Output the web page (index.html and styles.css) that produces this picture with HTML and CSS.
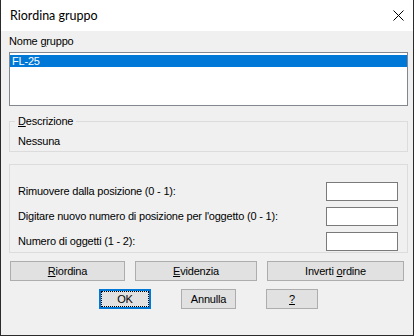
FILE: index.html
```html
<!DOCTYPE html>
<html lang="it">
<head>
  <meta charset="UTF-8" />
  <title>Riordina gruppo</title>
  <link rel="stylesheet" href="styles.css">
</head>
<body>
  <div class="window">
    <div class="titlebar">
      <span class="title">Riordina gruppo</span>
      <svg class="close" width="11" height="11" viewBox="0 0 11 11">
        <path d="M0.5 0.5 L10.5 10.5 M10.5 0.5 L0.5 10.5" stroke="#000" stroke-width="1" fill="none"/>
      </svg>
    </div>

    <div class="content">
      <div class="label">Nome <u>g</u>ruppo</div>
      <div class="listbox">
        <div class="item selected">FL-25</div>
      </div>

      <fieldset class="group desc">
        <legend><u>D</u>escrizione</legend>
        <div class="desc-text">Nessuna</div>
      </fieldset>

      <div class="group fields">
        <div class="field-row">
          <span>Rimuovere dalla posizione (0 - 1):</span>
          <input class="num" type="text">
        </div>
        <div class="field-row">
          <span>Digitare nuovo numero di posizione per l'oggetto (0 - 1):</span>
          <input class="num" type="text">
        </div>
        <div class="field-row">
          <span>Numero di oggetti (1 - 2):</span>
          <input class="num" type="text">
        </div>
      </div>

      <div class="actions">
        <button class="btn btn-reorder"><u>R</u>iordina</button>
        <button class="btn btn-highlight"><u>E</u>videnzia</button>
        <button class="btn btn-invert">Inverti <u>o</u>rdine</button>
      </div>

      <div class="dialog-btns">
        <button class="btn btn-ok">OK</button>
        <button class="btn btn-cancel">Annulla</button>
        <button class="btn btn-help"><u>?</u></button>
      </div>
    </div>
  </div>
</body>
</html>
```

FILE: styles.css
```css
html, body { margin: 0; padding: 0; }
body {
  font-family: 'Liberation Sans', Arial, sans-serif;
  font-size: 11px;
  letter-spacing: -0.2px;
  color: #000;
  background: #f0f0f0;
}

.window {
  box-sizing: border-box;
  width: 414px; height: 336px;
  background: #f0f0f0;
  border: 1px solid #2b2b2b;
  border-top: none;
}

/* title bar */
.titlebar {
  height: 31px;
  background: #fff;
  display: flex; align-items: center; justify-content: space-between;
  padding: 0 9px 0 9px;
}
.title {
  font-family: Lato, 'Open Sans', sans-serif;
  font-size: 12.5px;
  letter-spacing: 0;
  color: #000;
}
.close { display: block; }

.content { padding: 0 5px 0 8px; line-height: 13px; }

.label { padding-top: 4px; height: 13px; }

.listbox {
  box-sizing: border-box;
  margin-top: 4px;
  height: 54px;
  background: #fff;
  border: 1px solid #828790;
  padding-top: 2px;
}
.item { height: 12px; line-height: 12px; padding-left: 2px; }
.item.selected { background: #0078d7; color: #fff; }

/* group boxes */
.group {
  border: 1px solid #dcdcdc;
  margin: 0; min-width: 0;
}
.desc {
  margin-top: 9px;
  padding: 7px 8px 3px 8px;
}
.desc legend {
  padding: 0 3px;
  margin-left: -3px;
  line-height: 13px;
}

.fields {
  margin-top: 12px;
  padding: 17px 9px 1px 8px;
  display: flex; flex-direction: column; gap: 6px;
}
.field-row {
  display: flex; align-items: center; justify-content: space-between;
  height: 19px;
}
.num {
  box-sizing: border-box;
  width: 72px; height: 19px;
  margin: 0; padding: 0;
  border: 1px solid #7a7a7a;
  background: #fff;
}

/* buttons */
.btn {
  box-sizing: border-box;
  height: 20px;
  margin: 0; padding: 0;
  font-family: 'Liberation Sans', Arial, sans-serif;
  font-size: 11px;
  letter-spacing: -0.2px;
  color: #000;
  background: #e1e1e1;
  border: 1px solid #adadad;
}
.actions {
  display: flex; gap: 10px;
  margin-top: 8px; padding-left: 1px;
}
.btn-reorder { width: 115px; }
.btn-highlight { width: 122px; }
.btn-invert { width: 137px; }

.dialog-btns {
  display: flex; justify-content: center; gap: 30px;
  margin-top: 8px;
}
.btn-ok {
  width: 52px;
  border: 2px solid #0078d7;
  outline: 1px dotted #000;
  outline-offset: -3px;
}
.btn-cancel { width: 55px; }
.btn-help { width: 52px; }
```
